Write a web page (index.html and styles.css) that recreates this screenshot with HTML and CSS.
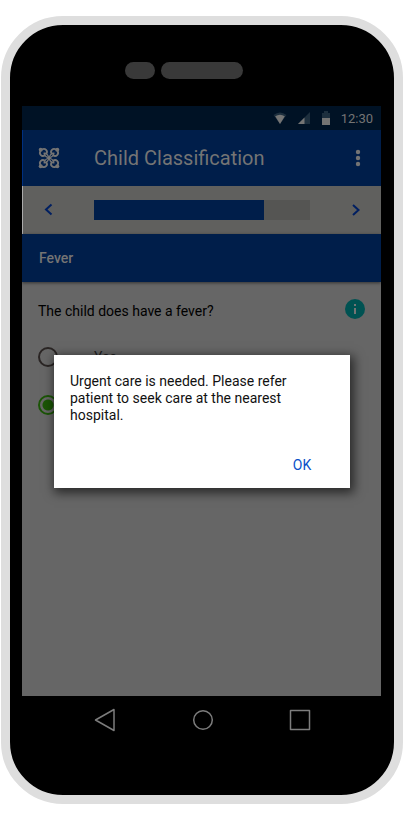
FILE: index.html
```html
<!DOCTYPE html>
<html lang="en">
<head>
<meta charset="utf-8">
<meta name="viewport" content="width=device-width, initial-scale=1">
<title>Child Classification</title>
<link rel="stylesheet" href="styles.css">
</head>
<body>
<div class="phone">
  <div class="speaker"><span class="sensor"></span><span class="earpiece"></span></div>
  <main class="screen">
    <div class="status">
      <svg width="14" height="14" viewBox="0 0 14 14" aria-hidden="true"><path d="M.5 4Q7-1 13.500 4L7 13z" fill="#1d2f3e"/><path d="M2.200 5.200Q7 2.200 11.800 5.200L7 13z" fill="#747474"/></svg>
      <svg width="14" height="14" viewBox="0 0 14 14" aria-hidden="true"><path d="M13 1v12H1z" fill="#1d2f3e"/><path d="M7.500 6.500V13H1z" fill="#747474"/></svg>
      <svg width="10" height="14" viewBox="0 0 10 14" aria-hidden="true"><path d="M1 2h2V0h4v2h2v5H1z" fill="#1d2f3e"/><path d="M1 7h8v7H1z" fill="#747474"/></svg>
      <span class="time">12:30</span>
    </div>
    <header class="appbar">
      <svg class="logo" width="24" height="24" viewBox="-12 -12 24 24" fill="none" stroke="#747474" stroke-width="1.800" stroke-linecap="round" aria-hidden="true">
        <defs>
          <g id="arm">
            <circle cx="-8.300" cy="-8.300" r="2" fill="#747474" stroke="none"/>
            <path d="M-7-8.500C-4-10.500-.500-7-2.800-4.200M-8.500-7C-10.500-4-7-.500-4.200-2.800"/>
            <path stroke-width="1.200" d="M0 0C-1-3-3-5-5-4.800M0 0C-3-1-5-3-4.800-5"/>
          </g>
        </defs>
        <use href="#arm"/>
        <use href="#arm" transform="rotate(90)"/>
        <use href="#arm" transform="rotate(180)"/>
        <use href="#arm" transform="rotate(270)"/>
      </svg>
      <h1>Child Classification</h1>
      <button class="icon" aria-label="More options"><svg width="6" height="18" viewBox="0 0 6 18" fill="#747474"><circle cx="3" cy="3" r="2.200"/><circle cx="3" cy="9" r="2.200"/><circle cx="3" cy="15" r="2.200"/></svg></button>
    </header>
    <div class="steps">
      <button class="icon" aria-label="Previous"><svg width="12" height="14" viewBox="0 0 12 14" fill="none" stroke="#001f61" stroke-width="2"><path d="M8.500 1.500L3 6.500L8.500 11.500"/></svg></button>
      <progress value="170" max="216" aria-label="Form progress"></progress>
      <button class="icon" aria-label="Next"><svg width="12" height="14" viewBox="0 0 12 14" fill="none" stroke="#001f61" stroke-width="2"><path d="M4 2L9.500 7L4 12"/></svg></button>
    </div>
    <h2>Fever</h2>
    <form class="question">
      <fieldset>
        <legend>The child does have a fever?</legend>
        <label><input type="radio" name="fever">Yes</label>
        <label><input type="radio" name="fever" aria-label="No" checked></label>
      </fieldset>
      <button type="button" class="icon info" aria-label="Information"><svg width="20" height="20" viewBox="0 0 20 20"><circle cx="10" cy="10" r="10" fill="#005252"/><path d="M9 5h2v2H9zM9 9h2v6H9z" fill="#747474"/></svg></button>
    </form>
    <div class="dialog" role="dialog" aria-modal="true" aria-describedby="message">
      <p id="message">Urgent care is needed. Please refer patient to seek care at the nearest hospital.</p>
      <button class="ok">OK</button>
    </div>
  </main>
  <nav class="keys">
    <button class="icon" aria-label="Back"><svg viewBox="0 0 24 24"><path d="M21 1.500v21L2.500 12z"/></svg></button>
    <button class="icon" aria-label="Home"><svg viewBox="0 0 24 24"><circle cx="12" cy="12" r="9.300"/></svg></button>
    <button class="icon" aria-label="Recent apps"><svg viewBox="0 0 24 24"><path d="M2.500 2.500h19v19h-19z"/></svg></button>
  </nav>
</div>
</body>
</html>
```
FILE: styles.css
```css
* { box-sizing: border-box; }
body {
  margin: 16px 1px;
  background: #fff;
  font-family: Roboto, sans-serif;
}
button {
  padding: 0;
  border: 0;
  background: none;
  font: inherit;
}
svg { display: block; }
.icon { display: flex; align-items: center; justify-content: center; }
.phone {
  padding: 37px 13px 63px 12px;
  border: 9px solid #dedede;
  border-radius: 62px;
  background: #000;
}
.speaker { display: flex; gap: 6px; padding-left: 103px; margin-bottom: 27px; }
.sensor, .earpiece { height: 17px; border-radius: 9px; background: #393939; }
.sensor { width: 30px; }
.earpiece { width: 82px; }
.screen {
  position: relative;
  min-height: 590px;
  background: #666;
}
.status {
  display: flex;
  align-items: center;
  justify-content: flex-end;
  gap: 10px;
  height: 24px;
  padding-right: 8px;
  background: #001225;
  color: #747474;
}
.time { font-size: 13px; }
.appbar, .steps {
  display: grid;
  grid-template-columns: 52px 1fr 52px;
  align-items: center;
}
.appbar {
  height: 56px;
  border-left: 1px solid #003080;
  background: #001e4a;
  column-gap: 19px;
  grid-template-columns: 52px 1fr 46px;
}
.logo { justify-self: center; }
h1, h2 { margin: 0; font-weight: 400; color: #747474; }
h1 { font-size: 20px; line-height: 24px; white-space: nowrap; }
.steps {
  height: 48px;
  column-gap: 19px;
  border-left: 1px solid #aaa;
  background: #60605e;
}
progress {
  width: 100%;
  height: 20px;
  border: 0;
  appearance: none;
  background: #555553;
}
progress::-webkit-progress-bar { background: #555553; }
progress::-webkit-progress-value { background: #001e4a; }
h2 {
  padding: 0 17px;
  background: #001e4a;
  box-shadow: 0 1px 3px rgba(0, 0, 0, .5);
  font-size: 14px;
  font-weight: 500;
  line-height: 48px;
}
.question {
  display: flex;
  justify-content: space-between;
  align-items: flex-start;
  padding: 17px 16px;
  color: #000;
  font-size: 14px;
}
fieldset { margin: 0; padding: 0; border: 0; }
legend { padding: 0; margin-bottom: 10px; line-height: 24px; }
label { display: flex; align-items: center; height: 48px; color: #222; }
input {
  width: 20px;
  height: 20px;
  margin: 0 36px 0 0;
  appearance: none;
  border: 2px solid #2a2524;
  border-radius: 50%;
}
input:checked {
  border-color: #1b5506;
  background: radial-gradient(circle, #1b5506 5px, transparent 6px);
}
.dialog {
  position: absolute;
  top: 249px;
  left: 32px;
  right: 31px;
  display: flex;
  flex-direction: column;
  padding: 18px 31px 11px 16px;
  background: #fff;
  box-shadow: 2px 3px 10px 2px rgba(0, 0, 0, .6);
  color: #111;
  font-size: 14px;
}
.dialog p { margin: 0 0 29px; line-height: 17px; }
.ok {
  align-self: flex-end;
  width: 34px;
  height: 24px;
  color: #0a50c8;
  font-size: 14px;
}
.keys {
  display: flex;
  justify-content: space-between;
  padding: 12px 69px 0 71px;
}
.keys svg {
  width: 24px;
  height: 24px;
  fill: none;
  stroke: #7c7c7c;
  stroke-width: 1.5;
  stroke-linejoin: round;
}
```
